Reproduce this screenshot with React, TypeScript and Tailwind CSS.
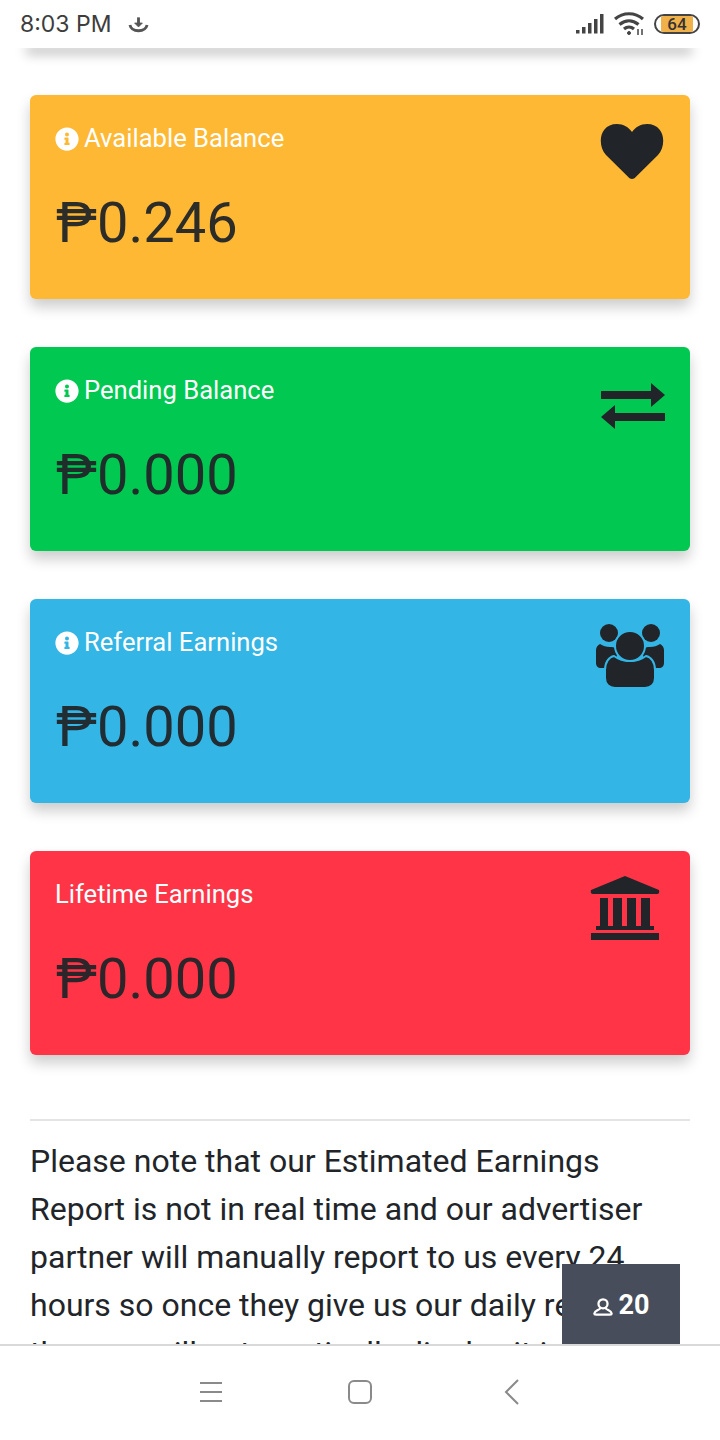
import { FaInfoCircle } from "react-icons/fa";
import type { ReactNode } from "react";

function HeartIcon() {
    return (
        <svg viewBox="0 0 64 55" className="w-[64px] h-[55px] mt-[4px] mr-[1px]" fill="#212529">
            <path d="M32 55c-1.500 0-2.500-.7-3.500-1.700L6 31C-3 21-1 0 17 0c6.500 0 11.500 3 15 8 3.500-5 8.500-8 15-8 18 0 20 21 11 31L35.500 53.300c-1 1-2 1.700-3.500 1.700z" />
        </svg>
    );
}

function ExchangeIcon() {
    return (
        <svg viewBox="0 0 64 47" className="w-[64px] h-[47px] mt-[11px]" fill="#212529">
            <path d="M0 8h50V0l14 12-14 12v-8H0z" />
            <path d="M64 30H14v-8L0 34l14 12v-8h50z" />
        </svg>
    );
}

function UsersIcon() {
    return (
        <svg viewBox="0 0 68 64" className="w-[68px] h-[64px] mr-[1px]" fill="#212529">
            <circle cx="13" cy="9" r="9" />
            <circle cx="55" cy="9" r="9" />
            <path d="M4 20c3 2 6 3 10 3 5 0 7 1 7 8 0 4-4 9-8 13H5c-3 0-5-2-5-5V26c0-3 2-5 4-6z" />
            <path d="M64 20c-3 2-6 3-10 3-5 0-7 1-7 8 0 4 4 9 8 13h8c3 0 5-2 5-5V26c0-3-2-5-4-6z" />
            <path d="M18 32c4 3 10 5 16 5s12-2 16-5c5 1 9 6 9 14v8c0 6-4 10-10 10H19c-6 0-10-4-10-10v-8c0-8 4-13 9-14z" stroke="#33b5e5" strokeWidth="2" />
            <circle cx="34" cy="22" r="15" stroke="#33b5e5" strokeWidth="2" />
        </svg>
    );
}

function BankIcon() {
    return (
        <svg viewBox="0 0 70 64" className="w-[70px] h-[64px] mr-[5px]" fill="#212529">
            <path d="M35 0l34 14q1 4-2 4H3q-3 0-2-4z" />
            <path d="M10 22h8v28h-8zM23 22h9v28h-9zM37 22h9v28h-9zM51 22h9v28h-9z" />
            <path d="M6 50h58v4H6z" />
            <path d="M1 57h68v7H1z" />
        </svg>
    );
}

function StatCard({ color, label, amount, info, icon }: { color: string; label: string; amount: string; info: boolean; icon: ReactNode }) {
    return (
        <div className={`${color} rounded-md h-[204px] pl-[25px] pr-[25px] pt-[25px] flex justify-between shadow-[0_8px_14px_rgba(0,0,0,0.2)]`}>
            <div>
                <div className="flex items-center gap-[5px] h-[36px] pt-[1px] text-white text-[25.6px] leading-none">
                    {info && <FaInfoCircle className="w-[24px] h-[24px]" />}
                    <span>{label}</span>
                </div>
                <div className="mt-[31px] ml-[1px] text-[#212529]/95 text-[56px] leading-[72px]">₱{amount}</div>
            </div>
            <div className="h-[64px] flex items-start">{icon}</div>
        </div>
    );
}

export default function App() {
    return (
        <div className="relative w-[720px] h-[1440px] bg-white overflow-hidden flex flex-col font-['Roboto',sans-serif]">
            <header className="relative z-10 h-[48px] flex items-center justify-between pl-[20px] pr-[20px]">
                <div className="absolute left-[26px] right-[28px] top-[40px] h-[8px] shadow-[0_6px_12px_rgba(0,0,0,0.28)] -z-10" />
                <div className="absolute inset-0 bg-white -z-10" />
                <div className="flex items-center gap-[16px] text-[#3d3d3d] text-[23px] font-['Inter',sans-serif]">
                    <span>8:03 PM</span>
                    <svg viewBox="0 0 22 16" className="w-[21px] h-[16px] mt-[2px]" fill="none" stroke="#555" strokeWidth="3">
                        <path d="M11 0v8" />
                        <path d="M7 6h8l-4 4z" fill="#555" strokeWidth="1" />
                        <path d="M2 8c1 4 5 6 9 6s8-2 9-6" />
                    </svg>
                </div>
                <div className="flex items-center gap-[10px]">
                    <svg viewBox="0 0 28 20" className="w-[28px] h-[20px] mt-[-1px]" fill="#444">
                        <rect x="0" y="16" width="3.500" height="3.500" />
                        <rect x="6" y="13" width="3.500" height="6.500" />
                        <rect x="12" y="9" width="3.500" height="10.500" />
                        <rect x="18" y="5" width="3.500" height="14.500" />
                        <rect x="24" y="0" width="3.500" height="19.500" />
                    </svg>
                    <svg viewBox="0 0 30 24" className="w-[30px] h-[24px]" fill="none" stroke="#444" strokeWidth="3.200">
                        <path d="M1 7c8-7 20-7 28 0" />
                        <path d="M5.500 12.500c6-5 13-5 19 0" />
                        <path d="M10 17c3-2.500 7-2.500 10 0" />
                        <circle cx="15" cy="21" r="1.500" fill="#444" strokeWidth="1" />
                        <path d="M24 17v6M28 17v6" strokeWidth="1.500" />
                    </svg>
                    <div className="relative w-[46px] h-[20px] rounded-full border-2 border-[#444] overflow-hidden flex items-center justify-center">
                        <div className="absolute left-[5px] top-0 bottom-0 w-[32px] bg-[#f0b04a]" />
                        <span className="relative text-[#333] text-[17px] leading-none font-medium">64</span>
                    </div>
                </div>
            </header>

            <main className="flex-1 overflow-hidden px-[30px] pt-[47px]">
                <div className="flex flex-col gap-[48px]">
                    <StatCard color="bg-[#ffb833]" label="Available Balance" amount="0.246" info icon={<HeartIcon />} />
                    <StatCard color="bg-[#00c851]" label="Pending Balance" amount="0.000" info icon={<ExchangeIcon />} />
                    <StatCard color="bg-[#33b5e5]" label="Referral Earnings" amount="0.000" info icon={<UsersIcon />} />
                    <StatCard color="bg-[#ff3547]" label="Lifetime Earnings" amount="0.000" info={false} icon={<BankIcon />} />
                </div>
                <hr className="mt-[64px] border-t-2 border-[#e4e4e4]" />
                <p className="mt-[16px] text-[#212529] text-[32px] leading-[48px] w-[660px]">
                    Please note that our Estimated Earnings Report is not in real time and our advertiser partner will manually report to us every 24 hours so once they give us our daily report then we will automatically display it in your account
                </p>
            </main>

            <div className="absolute right-[40px] top-[1264px] w-[118px] h-[80px] bg-[#474d5b] flex items-center justify-center gap-[6px] pt-[2px] text-white text-[27px] font-bold">
                <svg viewBox="0 0 22 20" className="w-[20px] h-[20px] mt-[4px]" fill="none" stroke="white" strokeWidth="2.500">
                    <circle cx="11" cy="6.500" r="5" />
                    <path d="M8 11c0 2-6 3-6.500 6 0 1 1 1.500 2 1.500h15c1 0 2-.5 2-1.500-.5-3-6.500-4-6.500-6" />
                </svg>
                <span>20</span>
            </div>

            <nav className="relative z-10 h-[96px] bg-white border-t-2 border-[#d9d9d9] flex items-center pl-[199px] pb-[3px]">
                <svg viewBox="0 0 24 22" className="w-[24px] h-[22px]" stroke="#8a8a8a" strokeWidth="2">
                    <path d="M1 2h22M1 11h22M1 20h22" />
                </svg>
                <div className="ml-[125px] w-[24px] h-[24px] rounded-[6px] border-2 border-[#8a8a8a]" />
                <svg viewBox="0 0 16 26" className="ml-[132px] w-[16px] h-[26px]" fill="none" stroke="#8a8a8a" strokeWidth="2">
                    <path d="M14 1L2 13l12 12" />
                </svg>
            </nav>
        </div>
    );
}
